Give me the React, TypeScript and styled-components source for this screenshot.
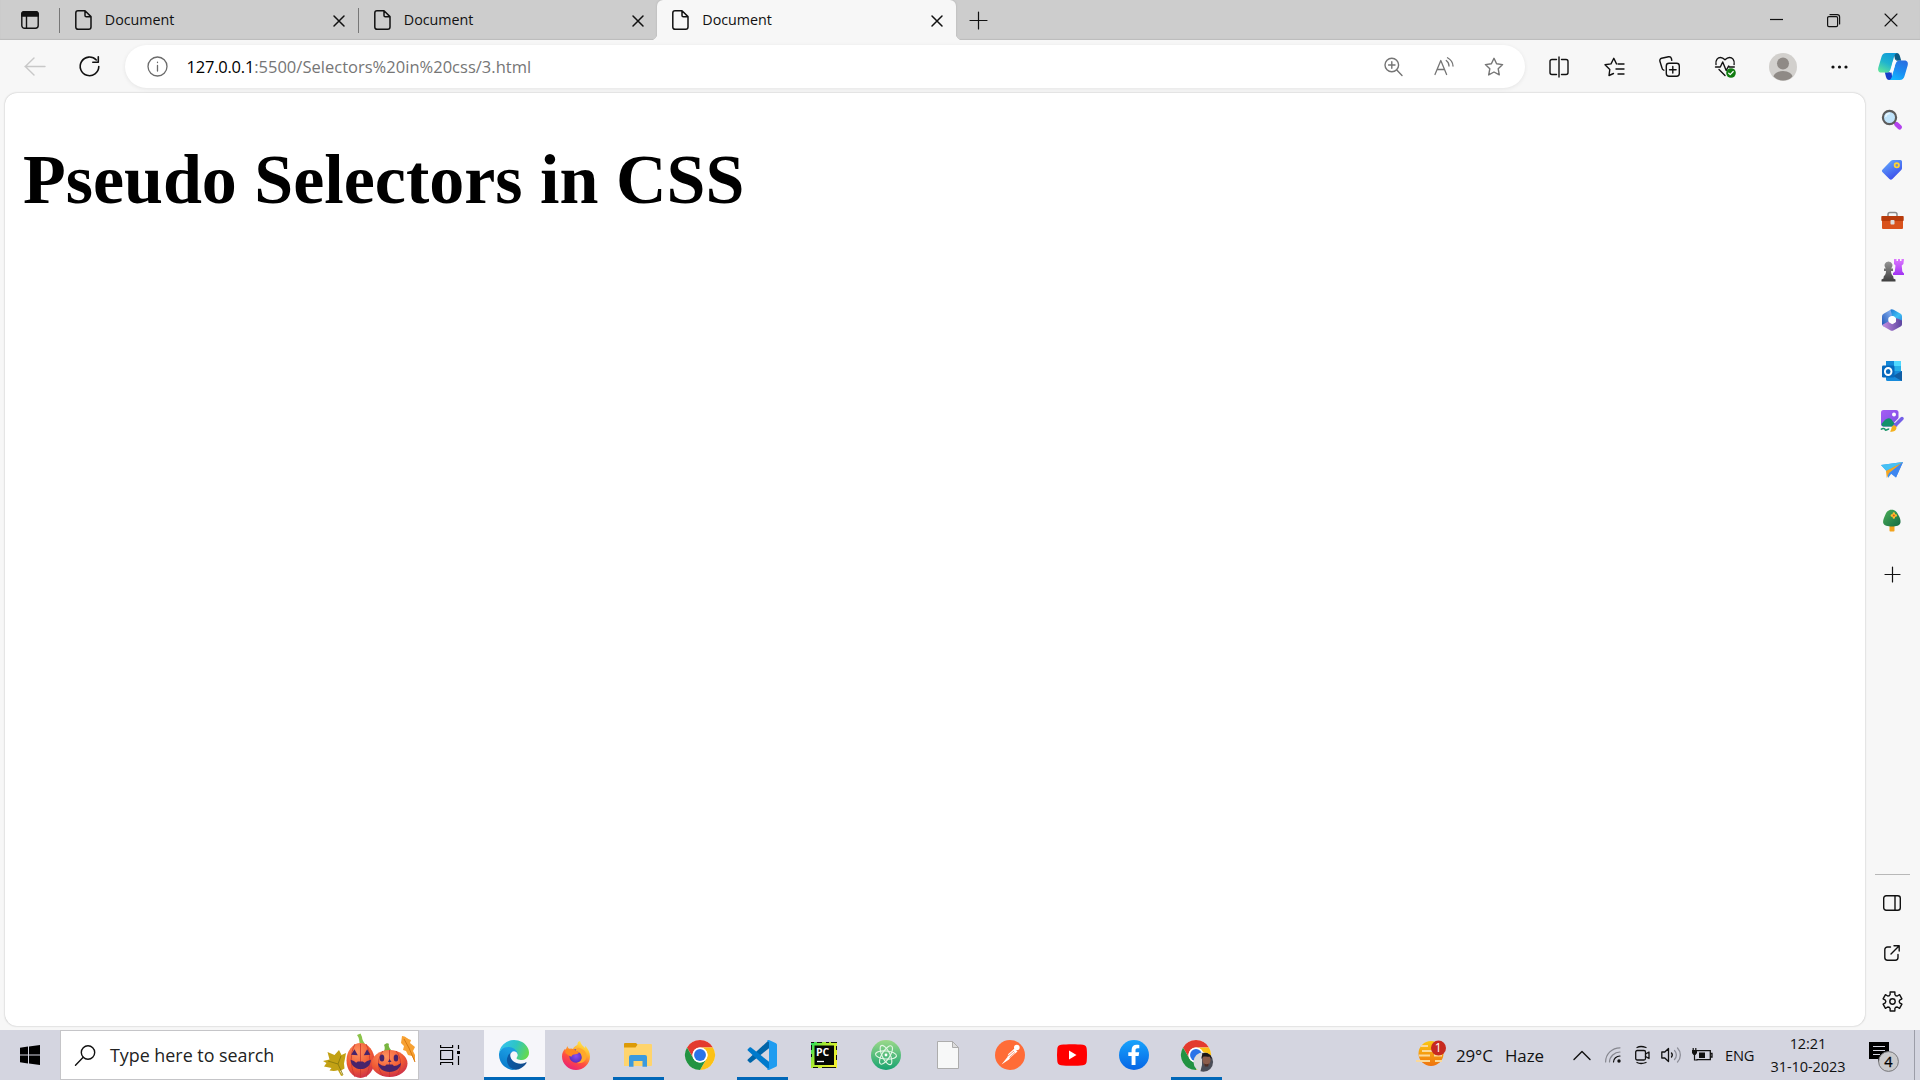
import React from 'react';
import styled, { createGlobalStyle, css } from 'styled-components';

const UI_FONT = '"Open Sans", "Noto Sans", sans-serif';

const GlobalStyle = createGlobalStyle`
  *, *::before, *::after { box-sizing: border-box; }
  body { margin: 0; overflow: hidden; font-family: ${UI_FONT}; color: #111; }
  svg { display: block; flex: none; overflow: visible; }
`;

const Screen = styled.div`
  width: 1920px;
  height: 1080px;
  display: flex;
  flex-direction: column;
  background: #f7f7f7;
`;

const Cell = styled.div<{ $w: number }>`
  width: ${(p) => p.$w}px;
  height: 100%;
  flex: none;
  display: flex;
  align-items: center;
  justify-content: center;
`;

/* ---------- tab strip ---------- */

const TabStrip = styled.header`
  height: 40px;
  flex: none;
  display: flex;
  background: #cdcdcd;
  box-shadow: inset 0 -1px 1px #bcbcbc;
`;

const Tab = styled.div<{ $active?: boolean }>`
  position: relative;
  width: 299px;
  height: 40px;
  display: flex;
  align-items: center;
  padding: 0 11px 1px ${(p) => (p.$active ? 15 : 15.5)}px;
  font-size: 14.3px;
  letter-spacing: -0.02px;
  ${(p) =>
    p.$active
      ? css`
          background: #f7f7f7;
          border-radius: 6px 6px 0 0;
          box-shadow: 0 0 2px #aaa;
          clip-path: inset(0 -6px 0 -6px);
          &::before, &::after {
            content: '';
            position: absolute;
            bottom: 0;
            width: 5px;
            height: 5px;
          }
          &::before { left: -5px; background: radial-gradient(circle at 0 0, transparent 4.6px, #f7f7f7 5px); }
          &::after { right: -5px; background: radial-gradient(circle at 100% 0, transparent 4.6px, #f7f7f7 5px); }
        `
      : css`
          &::before {
            content: '';
            position: absolute;
            left: 0;
            top: 8px;
            width: 1px;
            height: 25px;
            background: #777;
          }
        `}
`;

const TabTitle = styled.span`
  flex: 1;
  margin-left: 13.3px;
  line-height: 20px;
`;

const CloseSlot = styled.span`
  width: 16px;
  display: flex;
  justify-content: center;
  padding-top: 2px;
`;

const Spacer = styled.div`
  flex: 1;
`;

/* ---------- toolbar ---------- */

const Toolbar = styled.nav`
  height: 53px;
  flex: none;
  display: flex;
  align-items: center;
  padding-left: 7px;
`;

const AddressBar = styled.div`
  width: 1400px;
  height: 43px;
  margin: 0 6px 0 9px;
  padding: 0 6.5px 0 15px;
  display: flex;
  align-items: center;
  border-radius: 22px;
  background: #fff;
  box-shadow: 0 1px 4px rgba(0, 0, 0, 0.08);
`;

const Url = styled.div`
  flex: 1;
  margin-left: 11.5px;
  font-size: 16.5px;
  letter-spacing: 0.02px;
  line-height: 24px;
  color: #767676;
`;

const Host = styled.span`
  letter-spacing: -0.22px;
  color: #000;
`;

/* ---------- body ---------- */

const Workspace = styled.div`
  height: 937px;
  flex: none;
  display: flex;
  padding: 0 0 4px 5px;
`;

const Page = styled.main`
  width: 1860px;
  height: 933px;
  display: flow-root;
  padding: 0 17.9px;
  border-radius: 12px;
  background: #fff;
  box-shadow: 0 0 2px rgba(0, 0, 0, 0.28);
`;

const Heading = styled.h1`
  margin: 46.9px 0;
  font: bold 70px/80px "Liberation Serif", "Times New Roman", serif;
  color: #000;
`;

const Sidebar = styled.aside`
  width: 55px;
  padding-right: 0.5px;
  display: flex;
  flex-direction: column;
  align-items: center;
`;

const SideSlot = styled.div<{ $h?: number }>`
  height: ${(p) => p.$h ?? 50.1}px;
  flex: none;
  display: flex;
  align-items: center;
`;

const Divider = styled.div`
  width: 35px;
  height: 1px;
  background: #b8b8b8;
  margin-bottom: 2.5px;
`;

/* ---------- taskbar ---------- */

const Taskbar = styled.footer`
  height: 50px;
  flex: none;
  display: flex;
  align-items: center;
  background: #d4d5e0;
`;

const SearchBox = styled.div`
  width: 359px;
  height: 50px;
  margin-right: 1px;
  display: flex;
  align-items: center;
  padding: 0 3px 0 14px;
  border: 1px solid #c5c5c8;
  background: #fff;
  font-size: 17.9px;
  color: #222;
`;

const SearchLabel = styled.span`
  flex: 1;
  margin-left: 14px;
  letter-spacing: -0.02px;
  white-space: nowrap;
`;

const AppSlot = styled.div<{ $active?: boolean; $running?: boolean }>`
  width: 62px;
  height: 50px;
  flex: none;
  display: flex;
  align-items: center;
  justify-content: center;
  padding-right: 2px;
  border-right: 1px solid transparent;
  background: ${(p) => (p.$active ? '#f6f6fa' : 'transparent')};
  background-clip: padding-box;
  box-shadow: ${(p) => (p.$active ? 'inset 0 -3px #0067b8' : 'none')};
  ${(p) =>
    p.$running &&
    css`
      background: linear-gradient(#0067b8, #0067b8) 5px 100% / 51px 3px no-repeat;
    `}
`;

const TrayText = styled.span<{ $size: number; $w: number; $ls?: number }>`
  width: ${(p) => p.$w}px;
  flex: none;
  font-size: ${(p) => p.$size}px;
  letter-spacing: ${(p) => p.$ls ?? 0}px;
  white-space: nowrap;
`;

const Clock = styled.div`
  width: 102px;
  flex: none;
  display: flex;
  flex-direction: column;
  align-items: center;
  font-size: 14.5px;
  line-height: 23px;
  letter-spacing: -0.05px;
  padding-bottom: 1px;
`;

const ShowDesktop = styled.div`
  width: 6px;
  height: 50px;
  margin-left: 6px;
  border-left: 1px solid #9c9da8;
`;

/* ---------- line icons ---------- */

type LineProps = { w?: number; h?: number; color?: string; sw?: number; children: React.ReactNode };

const Line = ({ w = 20, h = 20, color = '#111', sw = 1.4, children }: LineProps) => (
  <svg width={w} height={h} viewBox={`0 0 ${w} ${h}`} fill="none" stroke={color} strokeWidth={sw} strokeLinecap="round" strokeLinejoin="round">
    {children}
  </svg>
);

const DocIcon = () => (
  <Line w={17} h={20} sw={1.5}>
    <path d="M3 .8h7L16 6.600V17a2.300 2.300 0 0 1-2.300 2.300H3A2.200 2.200 0 0 1 .8 17V3A2.200 2.200 0 0 1 3 .8ZM10 1v4.400a1.300 1.300 0 0 0 1.300 1.300H16" />
  </Line>
);

const CrossIcon = ({ size = 10, sw = 1.5 }: { size?: number; sw?: number }) => (
  <Line w={size} h={size} sw={sw}><path d={`M0 0L${size} ${size}M${size} 0L0 ${size}`} /></Line>
);

const WorkspacesIcon = () => (
  <Line w={18} h={18} sw={1.4}>
    <rect x=".8" y=".8" width="16.400" height="16.400" rx="2.700" />
    <path d="M.8 5V3A2.200 2.200 0 0 1 3 .8h12A2.200 2.200 0 0 1 17.200 3v2Z" fill="#111" />
    <path d="M5.500 5v12" />
  </Line>
);

const PlusIcon = ({ size = 17 }: { size?: number }) => (
  <Line w={size} h={size} sw={1.2}><path d={`M${size / 2} 0v${size}M0 ${size / 2}h${size}`} /></Line>
);

const starPath = 'M10 1.300l2.600 5.500 6 .8-4.400 4.200 1.100 6.100L10 15l-5.300 2.900 1.100-6.100L1.400 7.600l6-.8Z';

const CopilotIcon = () => (
  <svg width="30" height="27" viewBox="0 0 31 28">
    <defs>
      <linearGradient id="cpA" x1=".7" y1="0" x2=".2" y2="1"><stop stopColor="#109bd8" /><stop offset=".5" stopColor="#1fb3cf" /><stop offset="1" stopColor="#5ee49a" /></linearGradient>
      <linearGradient id="cpB" x1=".8" y1="0" x2=".3" y2="1"><stop stopColor="#2a6ee0" /><stop offset=".55" stopColor="#1b8ef2" /><stop offset="1" stopColor="#12b6ff" /></linearGradient>
    </defs>
    <path d="M16 0h3.400c2 0 2.700 1.500 3.400 3.600L24 8h-6Z" fill="#0c5a83" />
    <path d="M15 28h-3.500c-2 0-2.800-1.600-3.300-3.400L7 20h7Z" fill="#163fc9" />
    <path d="M8.500 0H20c-2 .3-2.700 1.600-3.400 4L13 16.500c-.7 2.300-2 3.800-4.600 3.800H3.500c-3 0-4-2.500-3.200-5.300L3.600 4C4.300 1.500 5.700 0 8.500 0Z" fill="url(#cpA)" />
    <path d="M22.500 28H11c2-.3 2.800-1.600 3.500-4L18 11.500c.7-2.300 2-3.800 4.600-3.800h4.900c3 0 4 2.500 3.200 5.300L27.400 24c-.7 2.500-2.100 4-4.900 4Z" fill="url(#cpB)" />
    <path d="M15.600 8.500c.5-1.400 1.700-1.500 3.500-1.500L16 18c-.5 1.800-1.600 2.400-3.500 2.400Z" fill="#f7fbff" />
  </svg>
);

const GearIcon = () => {
  const pts: string[] = [];
  for (let i = 0; i < 6; i++) {
    const at = (deg: number, r: number) => {
      const a = ((deg + i * 60 - 90) * Math.PI) / 180;
      return `${(10.5 + r * Math.cos(a)).toFixed(2)} ${(10.5 + r * Math.sin(a)).toFixed(2)}`;
    };
    pts.push(at(-14, 9.8), at(14, 9.8), at(19, 7.3), at(30, 6.7), at(41, 7.3));
  }
  return <Line w={21} h={21} sw={1.4}><path d={`M${pts.join('L')}Z`} /><circle cx="10.500" cy="10.500" r="2.700" /></Line>;
};

/* ---------- sidebar pictures ---------- */

const SearchPic = () => (
  <svg width="22" height="22" viewBox="0 0 22 22">
    <path d="m12.500 12.500 4 3.500" stroke="#777" strokeWidth="2.500" />
    <path d="m15.500 15.200 3.200 3" stroke="#b443ee" strokeWidth="4.600" strokeLinecap="round" />
    <circle cx="8.500" cy="8.500" r="6.600" fill="#bfe3fa" stroke="#5c5c5c" strokeWidth="2.200" />
    <path d="M4.700 8a4 4 0 0 1 4-3.500" stroke="#e9f7ff" strokeWidth="1.500" fill="none" />
  </svg>
);

const TagPic = () => (
  <svg width="22" height="22" viewBox="0 0 22 22">
    <defs><linearGradient id="tag" x1="0" y1="0" x2=".6" y2="1"><stop stopColor="#65b2ff" /><stop offset="1" stopColor="#3b4bea" /></linearGradient></defs>
    <path d="M12 1h7.500A1.500 1.500 0 0 1 21 2.500V9c0 1-.3 1.600-1 2.300l-8.600 8.800c-1 1-2 1-3 0L1.600 13.300c-1-1-1-1.900 0-2.800L10 1.800c.6-.6 1.200-.8 2-.8Z" fill="url(#tag)" />
    <circle cx="15.800" cy="6.300" r="2.200" fill="#7c8fc0" stroke="#ffd42e" strokeWidth="1.700" />
  </svg>
);

const ToolboxPic = () => (
  <svg width="23" height="18" viewBox="0 0 23 18">
    <path d="M7 6V3.500A2 2 0 0 1 9 1.500h5a2 2 0 0 1 2 2V6" fill="none" stroke="#8b8b8b" strokeWidth="1.500" />
    <rect x="1" y="8" width="21" height="10" rx="1" fill="#d9521c" />
    <rect x=".3" y="5" width="22.400" height="5" rx=".8" fill="#b83b0b" />
    <rect x="9.500" y="9" width="4" height="4.500" rx=".8" fill="#ddd" />
  </svg>
);

const ChessPic = () => (
  <svg width="23" height="24" viewBox="0 0 23 24">
    <defs>
      <linearGradient id="pawn" x1="0" y1="0" x2="0" y2="1"><stop stopColor="#969696" /><stop offset="1" stopColor="#3d3d3d" /></linearGradient>
      <linearGradient id="rook" x1="0" y1="0" x2="0" y2="1"><stop stopColor="#dd78ff" /><stop offset="1" stopColor="#a133f3" /></linearGradient>
    </defs>
    <path d="M13 1h2.500v2H17V1h2v2h1.500V1H23l-.6 5-1.700 1.500.6 6 1.700 2V17H12v-2l1.800-1.500.7-6L13 6Z" fill="url(#rook)" />
    <path d="M7.500 3.500a4 4 0 0 1 2.700 7H12V13h-2c.1 2.500.8 4 2.300 5.500l.2 2 2 1v2H.5v-2l2-1 .2-2C4.200 17 5 15.500 5 13H3v-2.500h1.800a4 4 0 0 1 2.700-7Z" fill="url(#pawn)" />
  </svg>
);

const M365Pic = () => (
  <svg width="22" height="22" viewBox="0 0 22 22">
    <defs>
      <linearGradient id="mA" x1="1" y1="0" x2="0" y2="1"><stop stopColor="#8fb8f6" /><stop offset="1" stopColor="#1c53b5" /></linearGradient>
      <linearGradient id="mB" x1="0" y1="0" x2="1" y2="1"><stop stopColor="#1d6fd0" /><stop offset=".6" stopColor="#3fc0f5" /><stop offset="1" stopColor="#2f87dc" /></linearGradient>
      <linearGradient id="mC" x1="0" y1="0" x2="1" y2="0"><stop stopColor="#c58de0" /><stop offset="1" stopColor="#5c45a0" /></linearGradient>
    </defs>
    <path d="M9 .9c1.300-.8 2.300-.8 3.600-.1l6.600 3.800c1.200.7 1.800 1.700 1.800 3V13L15 9.500 11.500 7 8 8.500Z" fill="url(#mB)" />
    <path d="M9.500.7 3 4.500C1.600 5.300 1 6.300 1 7.700v7.800L2.500 17.500l5-4.500V8.800L11 6.500Z" fill="url(#mA)" />
    <path d="m1.400 15.800 6-3.300 3.800 2.700 3.800-2.200v-4l6 2.500v3.400c0 1.300-.6 2.200-1.800 2.900l-6.400 3.500c-1.300.7-2.400.7-3.600 0L3 17.700a4 4 0 0 1-1.600-1.900Z" fill="url(#mC)" />
    <circle cx="11.200" cy="10.800" r="3.700" fill="#fff" />
  </svg>
);

const OutlookPic = () => (
  <svg width="22" height="22" viewBox="0 0 22 22">
    <path d="M5 1h15v12H5Z" fill="#29b1e9" /><path d="M5 1h8v5H5Z" fill="#1488d8" /><path d="M13 1h7v5h-7Z" fill="#50d9ff" />
    <path d="M5 11h16v10H6.500A1.500 1.500 0 0 1 5 19.500Z" fill="#168adb" /><path d="m21 11-9 5 9 5Z" fill="#115ea5" />
    <rect x="1" y="5.500" width="12.500" height="12" rx="1.200" fill="#0769bd" />
    <ellipse cx="7.200" cy="11.500" rx="3.300" ry="3.500" fill="none" stroke="#fff" strokeWidth="1.900" />
  </svg>
);

const DesignerPic = () => (
  <svg width="24" height="24" viewBox="0 0 24 24">
    <defs><linearGradient id="dsg" x1="0" y1="0" x2="1" y2="1"><stop stopColor="#a65df5" /><stop offset="1" stopColor="#794fe2" /></linearGradient></defs>
    <rect x="1" y="1" width="17.500" height="16.500" rx="2.500" fill="url(#dsg)" />
    <path d="M1.500 15c3.500-5 7-7.500 10-4.500l4 5.500-2.500 1.500H3.500c-1 0-2-.8-2-2.500Z" fill="#12926b" />
    <circle cx="14" cy="5.500" r="2" fill="#fff" />
    <path d="M.8 20.500c2-1.500 4-1.300 4.400.2.500 1.500 2.200-.8 4-.6" fill="none" stroke="#199468" strokeWidth="1.500" />
    <path d="m16 15.500 6-6" stroke="#f7f7f7" strokeWidth="5.500" /><path d="m14.500 17 7.500-7.500" stroke="#745fe8" strokeWidth="3.500" strokeLinecap="round" />
    <path d="M10 22.500c2-1.500.8-5.500 3.800-6.200 2.500 0 3.500 2.500 2 4.500-1.500 2-3.800 2.200-5.800 1.700Z" fill="#f5b11e" />
  </svg>
);

const DropPic = () => (
  <svg width="22" height="17" viewBox="0 0 22 17">
    <path d="M0 3 22 0 15 15.500 10.500 11.500 7 16 5.500 9Z" fill="#3c91f0" />
    <path d="M0 3 22 0 5.500 9Z" fill="#46c1f4" /><path d="M22 .3 5 9l.8 7L8 11Z" fill="#f5a622" /><path d="m9 11 13-11-7 15.500Z" fill="#3e86f0" />
  </svg>
);

const TreePic = () => (
  <svg width="20" height="23" viewBox="0 0 20 23">
    <defs><linearGradient id="tree" x1="0" y1="0" x2="1" y2="1"><stop stopColor="#4caf57" /><stop offset="1" stopColor="#146a43" /></linearGradient></defs>
    <rect x="7.500" y="15" width="5" height="7.500" rx=".8" fill="#f3a31d" />
    <path d="M9.500.8c4 0 5.800 2.500 7 5.500 1.500 2.500 2.300 5 2 7.200-.5 3.300-4.500 4-8.500 4s-8.500-.9-8.900-4C.9 11 2 9 3 6.500 4.500 3 6 .8 9.500.8Z" fill="url(#tree)" />
    <path d="M11.800 4.500v4M9.800 6.500h4" stroke="#ffbf2e" strokeWidth="2.400" strokeLinecap="round" /><circle cx="11.800" cy="6.500" r="1" fill="#d9521c" />
  </svg>
);

/* ---------- taskbar pictures ---------- */

const PumpkinFace = ({ x, y, s }: { x: number; y: number; s: number }) => (
  <g transform={`translate(${x} ${y}) scale(${s})`} fill="#47246b">
    <path d="m-8.500-3 3-5 3 5.500ZM3-2.500l3-5.500 3 5Z" />
    <path d="m-9 1.500 3 1.200 2 1.600 1.500-1.200h4.500l1.800 1.200L6 2.700l3.500-1.200C9.300 6.500 5.500 10 .3 10-5 10-8.700 6.500-9 1.500Z" />
  </g>
);

const PumpkinsPic = () => (
  <svg width="93" height="46" viewBox="0 0 93 46">
    <defs>
      <radialGradient id="pk" cx=".4" cy=".25" r=".8"><stop stopColor="#ff9360" /><stop offset=".6" stopColor="#f05a32" /><stop offset="1" stopColor="#c82b4d" /></radialGradient>
    </defs>
    <path d="m17 18 2.500 5 4.500-2-1 5.500-1 5 .5 5-4.500 2.500 3 5-2-.3-3-5.500c-3 1.200-6 .8-8.500.3l2-2.500L2 34.500 4.500 31 1 29l6.500-1.500L5.500 20l7 3Z" fill="#c2a114" />
    <path d="m6 29 10 3 3-8M16 32l5 11" stroke="#8a7a0d" fill="none" strokeWidth=".9" />
    <path d="M35 3 38.500 1.500 40 5c0 2 1 4 3 7l-5 1c-1-3 0-6-3-10Z" fill="#8bc34a" />
    <ellipse cx="38.500" cy="28.500" rx="14" ry="17.500" fill="url(#pk)" />
    <path d="M33 12c-5 9-5 22 0 33M44 12c5 9 5 22 0 33M38.500 12v33" stroke="#c9352e" fill="none" strokeWidth=".8" />
    <path d="M62 13c2-2 4-2 5-1-1 2 1 5 3 7h-8c1-2 1-4 0-6Z" fill="#79b540" />
    <ellipse cx="67.500" cy="31.500" rx="18" ry="13.500" fill="url(#pk)" />
    <path d="M61 19c-6 7-6 18 0 25M74 19c6 7 6 18 0 25M67.500 18v27" stroke="#c9352e" fill="none" strokeWidth=".8" />
    <PumpkinFace x={38.5} y={26} s={1.1} />
    <g fill="#47246b"><ellipse cx="60" cy="26" rx="2.300" ry="3.500" /><ellipse cx="74" cy="26" rx="2.300" ry="3.500" /><path d="m66 30 1.500-3 2 3Z" /><path d="m56 31 4 2.500 3 .5 1.500-1.500h6L72 34l3-.5 4-2.500c0 5-5.500 9-11.500 9S56 36 56 31Z" /></g>
    <path d="M80 4c4 0 5 3 9 4l-1 3 5 4-2 4 2 4v7l-3-6-4-1-2-4-3-1 1-4-3-3Z" fill="#f7a132" />
    <path d="m82 7 5 9 6 14" stroke="#d87810" fill="none" />
  </svg>
);

const EdgePic = () => (
  <svg width="30" height="30" viewBox="0 0 256 256">
    <defs>
      <linearGradient id="eA" x1=".1" y1=".5" x2="1" y2=".6"><stop stopColor="#0c59a4" /><stop offset="1" stopColor="#114a8b" /></linearGradient>
      <linearGradient id="eB" x1=".6" y1=".2" x2=".3" y2="1"><stop stopColor="#1b9de2" /><stop offset="1" stopColor="#0878c9" /></linearGradient>
      <linearGradient id="eC" x1="0" y1=".3" x2="1" y2=".6"><stop stopColor="#35c1f1" /><stop offset=".5" stopColor="#2ec5c5" /><stop offset="1" stopColor="#66d94c" /></linearGradient>
    </defs>
    <path d="M231 190.500a94 94 0 0 1-10.500 4.700 101.900 101.900 0 0 1-36 6.400c-47.400 0-88.700-32.600-88.700-74.500a31.500 31.500 0 0 1 16.500-27.300c-42.900 1.800-53.900 46.500-53.900 72.700 0 74 68.200 81.500 82.900 81.500 7.900 0 19.800-2.300 27-4.600l1.300-.4A128.300 128.300 0 0 0 236 195a4 4 0 0 0-5-4.500Z" fill="url(#eA)" />
    <path d="M105.700 241.400a79.200 79.200 0 0 1-22.700-21.300A80.700 80.700 0 0 1 112.400 99.800c3.100-1.500 8.500-4.100 15.600-4a32.400 32.400 0 0 1 25.700 13 31.900 31.900 0 0 1 6.300 18.700c0-.2 24.500-79.600-80-79.600C36.100 47.900 0 89.600 0 126.200a130 130 0 0 0 12.100 56 128 128 0 0 0 156.400 67 75.500 75.500 0 0 1-62.800-7.800Z" fill="url(#eB)" />
    <path d="M152.300 148.900c-.8 1-3.300 2.500-3.300 5.700 0 2.600 1.700 5.100 4.700 7.200 14.400 10 41.500 8.700 41.600 8.700a59.600 59.600 0 0 0 30.300-8.400A61.400 61.400 0 0 0 256 109.300c.3-22.400-8-37.300-11.300-43.900C223.500 23.900 177.700 0 128 0A128 128 0 0 0 0 126.200c.5-36.500 36.800-66 80-66 3.500 0 23.500.3 42 10.100 16.300 8.600 24.900 18.900 30.800 29.200 6.200 10.700 7.300 24.100 7.300 29.500 0 5.300-2.700 13.300-7.800 19.900Z" fill="url(#eC)" />
  </svg>
);

const FirefoxPic = () => (
  <svg width="28" height="29" viewBox="0 0 28 29">
    <defs>
      <linearGradient id="ff" x1=".8" y1="0" x2=".3" y2="1"><stop stopColor="#fff44f" /><stop offset=".35" stopColor="#ffb12f" /><stop offset=".65" stopColor="#ff4f3f" /><stop offset="1" stopColor="#e92078" /></linearGradient>
      <radialGradient id="ffp"><stop stopColor="#8b4ff0" /><stop offset="1" stopColor="#5930bd" /></radialGradient>
    </defs>
    <path d="M5.500 5c.3 1.500 1 2.500 2.300 3C9 7.700 10 7.700 11 8c.5-1.500 2.300-3.500 4.300-4L16 1l2-1c.6 3 3 5 5 7l.3-2.200C26 8 28 11.500 28 15.500 28 23 21.500 29 14 29S0 23 0 15.500c0-3.500 1.500-6 3-7.800L3.500 9 5.500 5Z" fill="url(#ff)" />
    <circle cx="14" cy="15" r="6.700" fill="url(#ffp)" />
    <path d="M3.500 8.500c3-1 7-1 9.500.5l4 2.500c-1 1.500-3.200 1.700-5 1.900-1.800.3-2.500 1.300-2.500 2.400-3-1-4-3-6-3.600Z" fill="#ff8a20" />
    <path d="M14 10c3 1 5 2 5.500 5 1 3-1 6-4.500 7 5 1 9-2 9.500-6C25 11 21.500 8 17.500 7c-2-.7-4 1-3.500 3Z" fill="#ffa82b" />
  </svg>
);

const FolderPic = () => (
  <svg width="28" height="24" viewBox="0 0 28 24">
    <path d="M0 1a1 1 0 0 1 1-1h11l2 2-1.500 3H0Z" fill="#dc9a06" />
    <path d="M0 4.500h11.500L14 1h13a1 1 0 0 1 1 1v20a1 1 0 0 1-1 1H0Z" fill="#ffd46c" />
    <path d="M5 14a2 2 0 0 1 2-2h14a2 2 0 0 1 2 2v9.700h-4.500V18h-9v5.700H5Z" fill="#3b9ade" />
  </svg>
);

const ChromeArt = () => (
  <>
    <circle cx="24" cy="24" r="24" fill="#fff" />
    <path d="M3.200 12A24 24 0 0 1 44.800 12H24a12 12 0 0 0-10.400 18Z" fill="#e33b2e" />
    <path d="M44.800 12A24 24 0 0 1 24 48l10.400-18A12 12 0 0 0 24 12Z" fill="#fbc116" />
    <path d="M24 48A24 24 0 0 1 3.200 12l10.400 18a12 12 0 0 0 20.800 0Z" fill="#229342" />
    <circle cx="24" cy="24" r="12" fill="#fff" /><circle cx="24" cy="24" r="9.500" fill="#2a73e8" />
  </>
);

const ChromePic = () => <svg width="30" height="30" viewBox="0 0 48 48"><ChromeArt /></svg>;

const ChromeProfilePic = () => (
  <svg width="30" height="30" viewBox="0 0 30 30">
    <defs><clipPath id="face"><circle cx="22.300" cy="22" r="9.800" /></clipPath></defs>
    <g transform="scale(.625)"><ChromeArt /></g>
    <g clipPath="url(#face)">
      <rect x="12" y="12" width="21" height="21" fill="#d9dadc" />
      <path d="M21 13h12v20H19l2-8Z" fill="#4a4d58" />
      <ellipse cx="25.500" cy="20" rx="4" ry="5.500" fill="#8b5d4c" />
      <path d="M20.500 19c0-5 2-6.500 5-6.500s5.500 2 5 6.500l-2-2.500c-2 .7-5-.3-6.500.3Z" fill="#1b1717" />
      <path d="M23 23.500c1.500 1 3.500 1 5 0l-1 3h-3Z" fill="#4f2f26" />
    </g>
  </svg>
);

const CodePic = () => (
  <svg width="30" height="30" viewBox="0 0 30 30">
    <path d="M22 0 1 19.300a1.200 1.200 0 0 0 0 1.800l1.500 1.300c.5.400 1.100.4 1.600.1L22 8.300Z" fill="#0065a9" />
    <path d="M22 30 1 10.700a1.200 1.200 0 0 1 0-1.800l1.500-1.300c.5-.4 1.100-.4 1.600-.1L22 21.700Z" fill="#007acc" />
    <path d="M22 0l7 3.200c.6.300 1 .9 1 1.600v20.400c0 .7-.4 1.300-1 1.600L22 30c-.9.200-1.500-.1-2-.7l2-1.300V2l-2-1.300c.5-.6 1.100-.9 2-.7Z" fill="#1f9cf0" />
  </svg>
);

const AppLetters = styled.text`
  font: bold 10.500px ${UI_FONT};
  fill: #fff;
`;

const PyCharmPic = () => (
  <svg width="26" height="26" viewBox="0 0 26 26">
    <defs><linearGradient id="pc" x1="0" y1="0" x2="1" y2=".6"><stop stopColor="#18db62" /><stop offset=".4" stopColor="#a6eb30" /><stop offset="1" stopColor="#f0f030" /></linearGradient></defs>
    <rect width="26" height="26" fill="url(#pc)" />
    <path d="M0 .5h3M6 .5h5M15 .5h3M20 .5h6M.5 3v5M.5 12v3M25.500 4v4M25.500 13v5M2 25.500h5M11 25.500h14" stroke="#111" />
    <rect x="3.500" y="3.500" width="19.500" height="19.500" fill="#050805" />
    <AppLetters x="5" y="13.500">PC</AppLetters>
    <path d="M6 19.500h7" stroke="#fff" strokeWidth="1.300" />
  </svg>
);

const AtomPic = () => (
  <svg width="30" height="30" viewBox="0 0 30 30" fill="none">
    <defs><linearGradient id="at" x1="0" y1="0" x2="0" y2="1"><stop stopColor="#9bd98a" /><stop offset="1" stopColor="#17a370" /></linearGradient></defs>
    <circle cx="15" cy="15" r="15" fill="url(#at)" />
    <g stroke="#e4f6e6" strokeWidth="1.100">
      <ellipse cx="15" cy="15" rx="10.500" ry="4" transform="rotate(5 15 15)" />
      <ellipse cx="15" cy="15" rx="10.500" ry="4" transform="rotate(64 15 15)" />
      <ellipse cx="15" cy="15" rx="10.500" ry="4" transform="rotate(122 15 15)" />
    </g>
    <circle cx="15" cy="15" r="1.400" fill="#fff" />
  </svg>
);

const FilePic = () => (
  <svg width="22" height="28" viewBox="0 0 22 28" fill="#f7f8f8" stroke="#adadad">
    <path d="M.5.5h15L21.500 6.500v21H.5Z" /><path d="M15.500.5v6h6Z" fill="#ddd" />
  </svg>
);

const PostmanPic = () => (
  <svg width="30" height="30" viewBox="0 0 30 30">
    <circle cx="15" cy="15" r="15" fill="#ff6c37" />
    <circle cx="21.800" cy="7.500" r="2.800" fill="#fff" />
    <path d="m19.500 8.500 3 3-7 6-1.500 2-7.500 5 6-7.500.8-3Z" fill="#fff" />
    <path d="m13 16 6-5M14.500 17.500l5.500-5" stroke="#ff6c37" strokeWidth=".7" />
  </svg>
);

const YouTubePic = () => (
  <svg width="30" height="22" viewBox="0 0 30 22">
    <path d="M4 .8C10 0 20 0 26 .8c2.500.3 3.500 1.700 3.700 4 .4 4 .4 8.400 0 12.400-.2 2.300-1.200 3.700-3.700 4-6 .8-16 .8-22 0-2.500-.3-3.500-1.700-3.700-4C-.1 13.200-.1 8.800.3 4.800.5 2.500 1.500 1.100 4 .8Z" fill="#f00" />
    <path d="m12 6.500 7.500 4.500-7.500 4.500Z" fill="#fff" />
  </svg>
);

const FacebookPic = () => (
  <svg width="30" height="30" viewBox="0 0 30 30">
    <defs><linearGradient id="fb" x1="0" y1="0" x2="0" y2="1"><stop stopColor="#18a3fc" /><stop offset="1" stopColor="#0665e5" /></linearGradient></defs>
    <circle cx="15" cy="15" r="15" fill="url(#fb)" />
    <path d="M12.600 25V16H9.300v-3.700h3.300V10c0-3.400 2-5.200 5-5.200 1 0 2 .1 2.700.3v3.200h-1.700c-1.500 0-2.100.8-2.100 2v2h3.700l-.6 3.700h-3.100v9Z" fill="#fff" />
  </svg>
);

const BadgeDigit = styled.text<{ $size: number }>`
  font: ${(p) => p.$size}px ${UI_FONT};
  text-anchor: middle;
`;

const WeatherPic = () => (
  <svg width="31" height="27" viewBox="0 0 31 27">
    <defs><linearGradient id="sun" x1="0" y1="0" x2="0" y2="1"><stop stopColor="#fbc812" /><stop offset="1" stopColor="#ef720e" /></linearGradient></defs>
    <circle cx="15" cy="11.500" r="12.500" fill="url(#sun)" />
    <path d="M5 4h7M6 9h11M3 13.500h11M18 13.500h8M0 19h14M19 19h7" stroke="#fbd999" strokeWidth="1.800" />
    <circle cx="22.500" cy="6" r="7.500" fill="#c72a20" />
    <BadgeDigit $size={12} x="22.300" y="10.300" fill="#fff">1</BadgeDigit>
  </svg>
);

const NotificationPic = () => (
  <svg width="31" height="31" viewBox="0 0 31 31">
    <path d="M1 2h20v17h-6l-5 3v-3H1Z" fill="#000" />
    <path d="M5 6.500h12M5 10.500h12M5 14.500h7" stroke="#d4d5e0" strokeWidth="1.200" />
    <circle cx="20.500" cy="21.500" r="9.900" fill="#c9c9cb" stroke="#77777a" />
    <BadgeDigit $size={14.5} x="20.500" y="26.700" fill="#000" stroke="#000" strokeWidth=".3">4</BadgeDigit>
  </svg>
);

const TABS = ['Document', 'Document', 'Document'];

const SIDE_APPS = [SearchPic, TagPic, ToolboxPic, ChessPic, M365Pic, OutlookPic, DesignerPic, DropPic, TreePic];

const APPS: { Pic: React.FC; active?: boolean; running?: boolean }[] = [
  { Pic: EdgePic, active: true },
  { Pic: FirefoxPic },
  { Pic: FolderPic, running: true },
  { Pic: ChromePic },
  { Pic: CodePic, running: true },
  { Pic: PyCharmPic },
  { Pic: AtomPic },
  { Pic: FilePic },
  { Pic: PostmanPic },
  { Pic: YouTubePic },
  { Pic: FacebookPic },
  { Pic: ChromeProfilePic, running: true },
];

const muted = '#757575';

export default function App() {
  return (
    <Screen>
      <GlobalStyle />
      <TabStrip>
        <Cell $w={59}><WorkspacesIcon /></Cell>
        {TABS.map((title, i) => (
          <Tab key={i} $active={i === 2}>
            <DocIcon />
            <TabTitle>{title}</TabTitle>
            <CloseSlot><CrossIcon /></CloseSlot>
          </Tab>
        ))}
        <Cell $w={44}><PlusIcon /></Cell>
        <Spacer />
        <Cell $w={58}><Line w={13} h={2} sw={1.2}><path d="M0 .5h13" strokeLinecap="butt" /></Line></Cell>
        <Cell $w={57}>
          <Line w={13} h={13} sw={1.2}><rect x=".6" y="2.600" width="10" height="10" rx="1.300" /><path d="M3 .6h7.200a2.400 2.400 0 0 1 2.400 2.400v7" /></Line>
        </Cell>
        <Cell $w={58}><CrossIcon size={12} sw={1.1} /></Cell>
      </TabStrip>

      <Toolbar>
        <Cell $w={55}><Line color="#c8c8c8"><path d="M0 9.500h20M9 1 .3 9.500 9 18" /></Line></Cell>
        <Cell $w={54}><Line w={21} h={21} sw={1.6}><path d="M19.800 10.500A9.300 9.300 0 1 1 17.300 4M19.300.8v5.400h-5.500" /></Line></Cell>
        <AddressBar>
          <Cell $w={35}>
            <Line w={21} h={21} color="#6b6b6b" sw={1.3}><circle cx="10.500" cy="10.500" r="9.500" /><path d="M10.500 9.500v5.500M10.500 6.200v.3" /></Line>
          </Cell>
          <Url><Host>127.0.0.1</Host>:5500/Selectors%20in%20css/3.html</Url>
          <Cell $w={50}><Line w={19} color={muted}><circle cx="7.800" cy="8" r="6.800" /><path d="m12.800 13 5.200 5.500M7.800 4.800v6.400M4.600 8H11" /></Line></Cell>
          <Cell $w={50}>
            <Line color={muted} sw={1.3}><path d="m1 17.500 5.800-14 5.800 14M3.200 12.500h7.200M12.200 3.500c1.700 1.200 2.800 3.200 2.800 5.500M13.500.8c3 1.700 5.300 4.500 5.500 8.200" /></Line>
          </Cell>
          <Cell $w={50}><Line color={muted}><path d={starPath} /></Line></Cell>
        </AddressBar>
        <Cell $w={55.5}>
          <Line><path d="M7.500 2.500H3A2 2 0 0 0 1 4.500v11a2 2 0 0 0 2 2h4.500M12.500 2.500H17a2 2 0 0 1 2 2v11a2 2 0 0 1-2 2h-4.500M10 0v20" /></Line>
        </Cell>
        <Cell $w={55.5}>
          <Line><path d="M9.500 16.500 5 18.500l.8-6L1 7.800l6-.9 2.800-5.600 2.700 5.600M14 7h6M12 12h8M14 17h6" /></Line>
        </Cell>
        <Cell $w={55.5}>
          <Line w={21} h={21}><rect x="7.300" y="7.300" width="13" height="13" rx="2.700" /><path d="M13.800 10.500v6.600M10.500 13.800h6.600M4.800 14.200A2.500 2.500 0 0 1 3 12L.9 5.200a2.400 2.400 0 0 1 1.700-3L9.500.8c1.500-.3 2.500.4 2.900 1.700l.4 1.800" /></Line>
        </Cell>
        <Cell $w={55.5}>
          <Line w={21} h={21}>
            <path d="M1 8.500C.3 3.500 3 1.500 5.500 1.500c2 0 3.200 1 4.500 2.300 1.300-1.300 2.500-2.300 4.500-2.300 2.600 0 5.300 2 4.600 7M.5 11h4.800l2.400-5 3.500 8.500 2.400-4.500.7 1h5M4 13.500l6 6" />
            <circle cx="16" cy="17" r="4.800" fill="#107c10" stroke="none" /><path d="m13.700 17.200 1.500 1.400 3-3.100" stroke="#fff" strokeWidth="1.200" />
          </Line>
        </Cell>
        <Cell $w={60}>
          <svg width="28" height="28" viewBox="0 0 28 28"><defs><clipPath id="av"><circle cx="14" cy="14" r="13.500" /></clipPath></defs>
            <circle cx="14" cy="14" r="14" fill="#d2d0cd" /><g fill="#8f8a86" clipPath="url(#av)"><circle cx="14" cy="10.500" r="6" /><ellipse cx="14" cy="25" rx="10" ry="7" /></g></svg>
        </Cell>
        <Cell $w={53}><svg width="17" height="4" viewBox="0 0 17 4" fill="#111"><circle cx="2" cy="2" r="1.600" /><circle cx="8.500" cy="2" r="1.600" /><circle cx="15" cy="2" r="1.600" /></svg></Cell>
        <Cell $w={53}><CopilotIcon /></Cell>
      </Toolbar>

      <Workspace>
        <Page><Heading>Pseudo Selectors in CSS</Heading></Page>
        <Sidebar>
          <SideSlot $h={2} />
          {SIDE_APPS.map((Pic, i) => <SideSlot key={i}><Pic /></SideSlot>)}
          <SideSlot $h={57}><PlusIcon size={15} /></SideSlot>
          <Spacer />
          <Divider />
          <SideSlot $h={50}><Line w={18} h={16}><rect x=".7" y=".7" width="16.600" height="14.600" rx="2.500" /><path d="M12 1v14" /></Line></SideSlot>
          <SideSlot $h={50}><Line w={16} h={16}><path d="M6.500 2H3.500A2.700 2.700 0 0 0 .8 4.700v7.800a2.700 2.700 0 0 0 2.700 2.700h7.800a2.700 2.700 0 0 0 2.700-2.700V9.500M10 .8h5.200V6M15 1 7 9" /></Line></SideSlot>
          <SideSlot $h={48.5}><GearIcon /></SideSlot>
        </Sidebar>
      </Workspace>

      <Taskbar>
        <Cell $w={60}>
          <svg width="20" height="20" viewBox="0 0 20 20" fill="#000"><path d="M0 2.800 8 1.600v7.900H0ZM9 1.500 20 0v9.500H9ZM0 10.500h8v7.900l-8-1.200ZM9 10.500h11V20L9 18.500Z" /></svg>
        </Cell>
        <SearchBox>
          <Line w={21} h={21} sw={1.4}><circle cx="13" cy="7.500" r="6.700" /><path d="m8.200 12.200-7.700 8" /></Line>
          <SearchLabel>Type here to search</SearchLabel>
          <PumpkinsPic />
        </SearchBox>
        <Cell $w={60}>
          <Line w={20} h={20} color="#000" sw={1.2}><path d="M.6 0v2.500h12V0M.6 20v-2.500h12V20M.6 5.500h12v9H.6ZM18.500 0v4M18.500 11v9" strokeLinecap="butt" /><path d="M17 6h3v3h-3Z" fill="#000" stroke="none" /></Line>
        </Cell>
        <Cell $w={4} />
        {APPS.map(({ Pic, active, running }, i) => <AppSlot key={i} $active={active} $running={running}><Pic /></AppSlot>)}
        <Spacer />
        <Cell $w={41}><WeatherPic /></Cell>
        <Cell $w={4} />
        <TrayText $size={16.9} $w={49} $ls={-0.1}>29°C</TrayText>
        <TrayText $size={16.9} $w={60} $ls={-0.1}>Haze</TrayText>
        <Cell $w={33}><Line w={16} h={9} sw={1.4}><path d="m0 8.500 8-8 8 8" /></Line></Cell>
        <Cell $w={29}>
          <Line w={16} h={16} sw={1.2}>
            <g stroke="#86878f"><path d="M.6 15C.6 7 7 .8 15 .8M4.500 15C4.500 9.500 9.500 5 15 5" /></g>
            <path d="M8.500 15C8.500 11.500 11.500 9 15 9" /><circle cx="14" cy="14" r="1.700" fill="#111" stroke="none" />
          </Line>
        </Cell>
        <Cell $w={30}>
          <Line w={15} h={18} sw={1.3}><rect x=".7" y="4.500" width="9.800" height="9.500" rx="1.500" /><path d="m10.500 8 3.500-2v6.500l-3.500-2M2 1.500C4 .4 8 .4 11 1.500M2 16.500c2 1.100 6 1.100 9 0" /></Line>
        </Cell>
        <Cell $w={28}>
          <Line w={20} h={16} sw={1.3}><path d="M.8 5h3L7.500 1.500v13L3.800 11h-3ZM10.500 6c1 1.200 1 2.800 0 4" /><path d="M13.500 3.500c2.500 2.500 2.500 6.500 0 9M16.500 1c3.800 4 3.800 10 0 14" stroke="#8d8e98" /></Line>
        </Cell>
        <Cell $w={34}>
          <svg width="20" height="14" viewBox="0 0 20 14"><path d="M5 2.700h13.300v9H4.500M18.500 5.500H20v3.500h-1.500" fill="none" stroke="#111" strokeWidth="1.300" /><path d="M7 4.500h6v5.500H7Z M0 2h5v3L3.500 7H1.500L0 5Z" fill="#111" /><path d="M1.200 0v2M3.800 0v2M2.500 7v5h3" stroke="#111" strokeWidth="1.200" fill="none" /></svg>
        </Cell>
        <Cell $w={6} />
        <TrayText $size={14.7} $w={32} $ls={-0.2}>ENG</TrayText>
        <Clock><span>12:21</span><span>31-10-2023</span></Clock>
        <Cell $w={49}><NotificationPic /></Cell>
        <ShowDesktop />
      </Taskbar>
    </Screen>
  );
}
